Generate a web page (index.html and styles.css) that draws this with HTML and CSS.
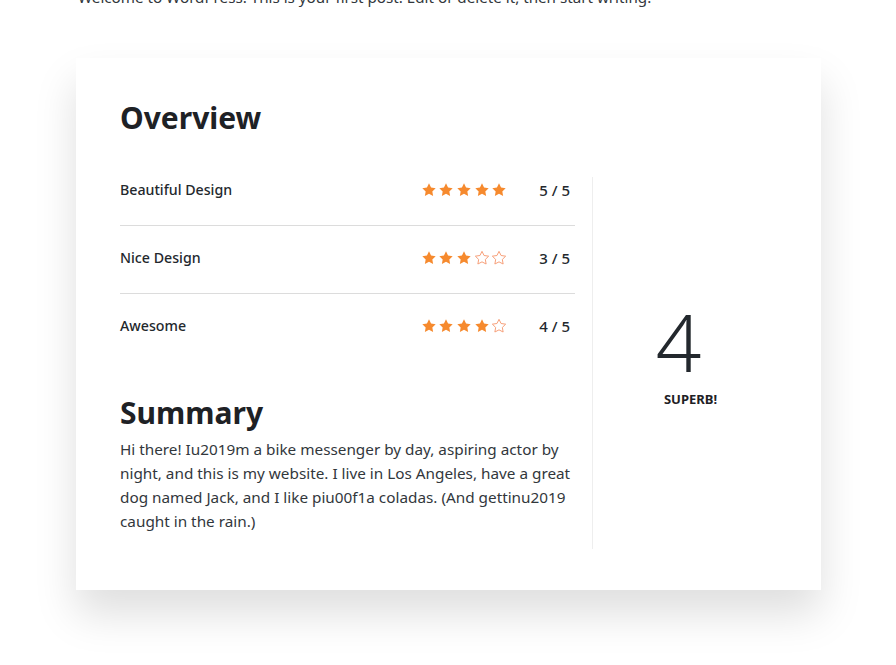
FILE: index.html
```html
<!DOCTYPE html>
<html>
<head>
<meta charset="utf-8">
<link rel="stylesheet" href="styles.css">
</head>
<body>
<p class="intro">Welcome to WordPress. This is your first post. Edit or delete it, then start writing.</p>
<div class="card">
  <h2 class="title">Overview</h2>
  <div class="body">
    <div class="main">
      <div class="row first">
        <span class="label">Beautiful Design</span>
        <span class="stars">
          <svg class="star on" viewBox="0 0 24 24"><path d="M12 2l3.09 6.26L22 9.27l-5 4.87 1.18 6.88L12 17.77l-6.18 3.25L7 14.14 2 9.27l6.91-1.01L12 2z"/></svg>
          <svg class="star on" viewBox="0 0 24 24"><path d="M12 2l3.09 6.26L22 9.27l-5 4.87 1.18 6.88L12 17.77l-6.18 3.25L7 14.14 2 9.27l6.91-1.01L12 2z"/></svg>
          <svg class="star on" viewBox="0 0 24 24"><path d="M12 2l3.09 6.26L22 9.27l-5 4.87 1.18 6.88L12 17.77l-6.18 3.25L7 14.14 2 9.27l6.91-1.01L12 2z"/></svg>
          <svg class="star on" viewBox="0 0 24 24"><path d="M12 2l3.09 6.26L22 9.27l-5 4.87 1.18 6.88L12 17.77l-6.18 3.25L7 14.14 2 9.27l6.91-1.01L12 2z"/></svg>
          <svg class="star on" viewBox="0 0 24 24"><path d="M12 2l3.09 6.26L22 9.27l-5 4.87 1.18 6.88L12 17.77l-6.18 3.25L7 14.14 2 9.27l6.91-1.01L12 2z"/></svg>
        </span>
        <span class="score">5 / 5</span>
      </div>
      <div class="row">
        <span class="label">Nice Design</span>
        <span class="stars">
          <svg class="star on" viewBox="0 0 24 24"><path d="M12 2l3.09 6.26L22 9.27l-5 4.87 1.18 6.88L12 17.77l-6.18 3.25L7 14.14 2 9.27l6.91-1.01L12 2z"/></svg>
          <svg class="star on" viewBox="0 0 24 24"><path d="M12 2l3.09 6.26L22 9.27l-5 4.87 1.18 6.88L12 17.77l-6.18 3.25L7 14.14 2 9.27l6.91-1.01L12 2z"/></svg>
          <svg class="star on" viewBox="0 0 24 24"><path d="M12 2l3.09 6.26L22 9.27l-5 4.87 1.18 6.88L12 17.77l-6.18 3.25L7 14.14 2 9.27l6.91-1.01L12 2z"/></svg>
          <svg class="star off" viewBox="0 0 24 24"><path d="M12 2l3.09 6.26L22 9.27l-5 4.87 1.18 6.88L12 17.77l-6.18 3.25L7 14.14 2 9.27l6.91-1.01L12 2z"/></svg>
          <svg class="star off" viewBox="0 0 24 24"><path d="M12 2l3.09 6.26L22 9.27l-5 4.87 1.18 6.88L12 17.77l-6.18 3.25L7 14.14 2 9.27l6.91-1.01L12 2z"/></svg>
        </span>
        <span class="score">3 / 5</span>
      </div>
      <div class="row last">
        <span class="label">Awesome</span>
        <span class="stars">
          <svg class="star on" viewBox="0 0 24 24"><path d="M12 2l3.09 6.26L22 9.27l-5 4.87 1.18 6.88L12 17.77l-6.18 3.25L7 14.14 2 9.27l6.91-1.01L12 2z"/></svg>
          <svg class="star on" viewBox="0 0 24 24"><path d="M12 2l3.09 6.26L22 9.27l-5 4.87 1.18 6.88L12 17.77l-6.18 3.25L7 14.14 2 9.27l6.91-1.01L12 2z"/></svg>
          <svg class="star on" viewBox="0 0 24 24"><path d="M12 2l3.09 6.26L22 9.27l-5 4.87 1.18 6.88L12 17.77l-6.18 3.25L7 14.14 2 9.27l6.91-1.01L12 2z"/></svg>
          <svg class="star on" viewBox="0 0 24 24"><path d="M12 2l3.09 6.26L22 9.27l-5 4.87 1.18 6.88L12 17.77l-6.18 3.25L7 14.14 2 9.27l6.91-1.01L12 2z"/></svg>
          <svg class="star off" viewBox="0 0 24 24"><path d="M12 2l3.09 6.26L22 9.27l-5 4.87 1.18 6.88L12 17.77l-6.18 3.25L7 14.14 2 9.27l6.91-1.01L12 2z"/></svg>
        </span>
        <span class="score">4 / 5</span>
      </div>
      <h2 class="subtitle">Summary</h2>
      <p class="summary">Hi there! Iu2019m a bike messenger by day, aspiring actor by night, and this is my website. I live in Los Angeles, have a great dog named Jack, and I like piu00f1a coladas. (And gettinu2019 caught in the rain.)</p>
    </div>
    <div class="side">
      <div class="big">4</div>
      <div class="verdict">SUPERB!</div>
    </div>
  </div>
</div>
</body>
</html>
```

FILE: styles.css
```css
html, body {
  margin: 0;
  padding: 0;
  background: #fff;
}
body {
  font-family: "Noto Sans", "Open Sans", sans-serif;
  color: #23282d;
  padding-bottom: 80px;
}
.intro {
  margin: -15px 0 0 78px;
  font-size: 15.2px;
  line-height: 24px;
  color: #32373c;
}
.card {
  margin: 49px 0 0 76px;
  width: 745px;
  box-sizing: border-box;
  padding: 40px 33px 41px 44px;
  background: #fff;
  box-shadow: 0 24px 40px rgba(0, 0, 0, 0.13);
}
.title, .subtitle {
  margin: 0;
  font-size: 30px;
  line-height: 40px;
  font-weight: 700;
  color: #1e2125;
}
.title {
  margin-bottom: 39px;
}
.body {
  display: flex;
}
.main {
  width: 455px;
  padding-bottom: 16px;
}
.row {
  display: flex;
  align-items: center;
  padding: 22px 5px 25px 0;
  border-bottom: 1px solid #dcdcdc;
  line-height: 20px;
}
.row.first {
  padding-top: 3px;
}
.row.last {
  border-bottom: none;
}
.label {
  flex: 1;
  font-size: 14.2px;
  font-weight: 500;
  color: #23282d;
}
.stars {
  display: flex;
  gap: 1.6px;
  margin-right: 32px;
}
.star {
  width: 16px;
  height: 16px;
  display: block;
}
.star.on path {
  fill: #f68a2e;
}
.star.off path {
  fill: none;
  stroke: #f7a07a;
  stroke-width: 1.5;
}
.score {
  font-size: 15px;
  font-weight: 500;
  color: #23282d;
}
.subtitle {
  margin-top: 32px;
}
.summary {
  margin: 4px 0 0 0;
  font-size: 15.3px;
  line-height: 24px;
  color: #32373c;
}
.side {
  margin-left: 17px;
  border-left: 1px solid #eeeeee;
  flex: 1;
  display: flex;
  flex-direction: column;
  align-items: center;
  justify-content: center;
  padding-bottom: 19px;
}
.big {
  font-size: 80px;
  line-height: 80px;
  font-weight: 300;
  color: #23282d;
  padding-right: 24px;
}
.verdict {
  margin-top: 10px;
  font-size: 13px;
  line-height: 16px;
  font-weight: 700;
  color: #1e2125;
}
```
